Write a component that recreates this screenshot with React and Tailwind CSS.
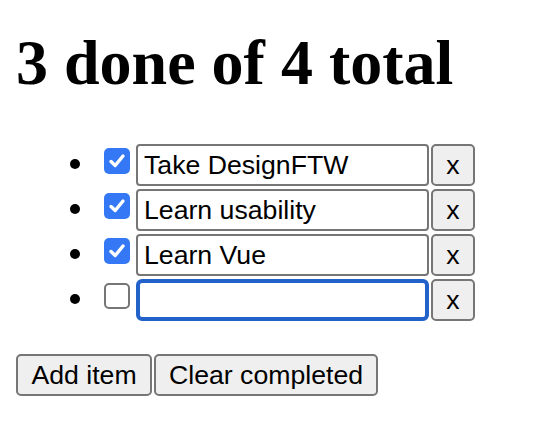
import React from "react";

const items = [
  { text: "Take DesignFTW", done: true },
  { text: "Learn usability", done: true },
  { text: "Learn Vue", done: true },
  { text: "", done: false, focused: true },
];

const Check = ({ done }) => {
  if (!done) {
    return (
      <span className="self-start mt-[4px] ml-[24px] w-[26px] h-[26px] rounded-[5px] border-2 border-[#767676] bg-white" />
    );
  }
  return (
    <span className="self-start mt-[4px] ml-[24px] w-[26px] h-[26px] rounded-[5px] bg-[#3478f6] flex items-center justify-center">
      <svg width="20" height="20" viewBox="0 0 20 20">
        <path d="M4 10.5 L8.2 14.5 L16 5" fill="none" stroke="white" strokeWidth="3.4" strokeLinecap="round" strokeLinejoin="round" />
      </svg>
    </span>
  );
};

const Row = ({ item }) => {
  return (
    <li className="flex items-center h-[42px]">
      <span className="w-[10px] h-[10px] rounded-full bg-black -mt-[2px]" />
      <Check done={item.done} />
      <input
        type="text"
        defaultValue={item.text}
        className={
          item.focused
            ? "ml-[6px] w-[293px] h-[42px] px-[4px] border-4 border-[#2262c9] rounded-[6px] bg-white text-black text-[26.67px] outline-none"
            : "ml-[6px] w-[293px] h-[42px] px-[6px] border-2 border-[#767676] rounded-[4px] bg-white text-black text-[26.67px] outline-none"
        }
      />
      <button className="ml-[2px] w-[44px] h-[42px] border-2 border-[#767676] rounded-[5px] bg-[#efefef] text-black text-[26.67px] leading-none">
        x
      </button>
    </li>
  );
};

export default function App() {
  return (
    <div className="w-[548px] h-[426px] bg-white px-[16px] pt-[26px] font-['Liberation_Sans',Arial,sans-serif]">
      <h1 className="font-['Liberation_Serif','Times_New_Roman',serif] font-bold text-[64px] leading-[74px] text-black">
        3 done of 4 total
      </h1>
      <ul className="mt-[44px] pl-[54px] flex flex-col gap-[3px]">
        {items.map((item, i) => (
          <Row key={i} item={item} />
        ))}
      </ul>
      <div className="mt-[33px] flex gap-[2px]">
        <button className="w-[136px] h-[42px] border-2 border-[#767676] rounded-[5px] bg-[#efefef] text-black text-[26.67px] leading-none">
          Add item
        </button>
        <button className="w-[224px] h-[42px] border-2 border-[#767676] rounded-[5px] bg-[#efefef] text-black text-[26.67px] leading-none">
          Clear completed
        </button>
      </div>
    </div>
  );
}
